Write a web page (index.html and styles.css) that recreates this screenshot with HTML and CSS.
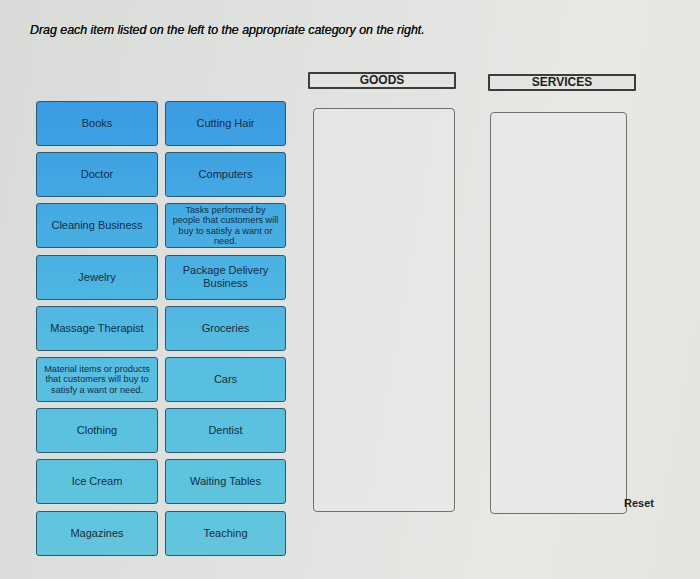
FILE: index.html
```html
<!DOCTYPE html>
<html>
<head>
<meta charset="utf-8">
<link rel="stylesheet" href="styles.css">
</head>
<body>
<p class="title">Drag each item listed on the left to the appropriate category on the right.</p>
<div class="board">
  <div class="tiles">
    <div class="tile">Books</div>
    <div class="tile">Cutting Hair</div>
    <div class="tile">Doctor</div>
    <div class="tile">Computers</div>
    <div class="tile">Cleaning Business</div>
    <div class="tile small tasks">Tasks performed by people that customers will buy to satisfy a want or need.</div>
    <div class="tile">Jewelry</div>
    <div class="tile">Package Delivery Business</div>
    <div class="tile">Massage Therapist</div>
    <div class="tile">Groceries</div>
    <div class="tile small">Material items or products that customers will buy to satisfy a want or need.</div>
    <div class="tile">Cars</div>
    <div class="tile">Clothing</div>
    <div class="tile">Dentist</div>
    <div class="tile">Ice Cream</div>
    <div class="tile">Waiting Tables</div>
    <div class="tile">Magazines</div>
    <div class="tile">Teaching</div>
  </div>
  <div class="cat goods">
    <div class="cat-head">GOODS</div>
    <div class="cat-box"></div>
  </div>
  <div class="cat services">
    <div class="cat-head">SERVICES</div>
    <div class="cat-box"></div>
  </div>
  <div class="reset">Reset</div>
</div>
</body>
</html>
```
FILE: styles.css
```css
html, body {
  margin: 0;
  height: 100%;
}
body {
  background: linear-gradient(100deg, #d8dbd7 0%, #e1e3e0 45%, #e8e8e5 75%, #e4e4e1 100%);
  font-family: "Liberation Sans", Arial, sans-serif;
  color: #1b1b1b;
  overflow: hidden;
}
.title {
  margin: 0;
  padding: 22px 0 0 30px;
  font-size: 12.4px;
  line-height: 16px;
  font-style: italic;
  color: #111;
  text-shadow: 0 0 0.4px #111;
}
.board {
  display: flex;
  margin-top: 34px;
  align-items: flex-start;
}
.tiles {
  display: grid;
  grid-template-columns: 122px 121px;
  grid-auto-rows: 45px;
  column-gap: 7px;
  row-gap: 6.2px;
  margin: 29px 0 0 36px;
}
.tile {
  display: flex;
  align-items: center;
  justify-content: center;
  text-align: center;
  border: 1px solid #2b5a70;
  border-radius: 3px;
  background: linear-gradient(to bottom, #3a9be2 100px, #46ade3 230px, #56bee0 360px, #62c6dc 560px) fixed;
  font-size: 11px;
  line-height: 13px;
  color: #182d40;
  padding: 0 4px;
  box-sizing: border-box;
}
.tile.small {
  font-size: 9.2px;
  line-height: 10.5px;
  padding: 0 3px;
}
.tile.tasks {
  padding: 0 5px;
}
.cat {
  display: flex;
  flex-direction: column;
  width: 148px;
}
.goods {
  margin-left: 22px;
}
.services {
  margin-left: 32px;
  margin-top: 2px;
}
.cat-head {
  height: 17px;
  border: 2px solid #3c3c3c;
  border-radius: 1px;
  box-sizing: border-box;
  font-weight: bold;
  font-size: 12px;
  line-height: 13px;
  text-align: center;
  color: #1e1e1e;
  background: #e3e4e2;
}
.cat-box {
  margin: 19px 1px 0 5px;
  height: 402px;
  border: 1px solid #6e716e;
  border-radius: 4px;
  background: rgba(236, 238, 235, 0.35);
}
.services .cat-box {
  margin: 21px 9px 0 2px;
  height: 400px;
}
.reset {
  align-self: flex-end;
  margin-left: -12px;
  margin-bottom: 47px;
  font-weight: bold;
  font-size: 11px;
  color: #1e1e1e;
}
```
